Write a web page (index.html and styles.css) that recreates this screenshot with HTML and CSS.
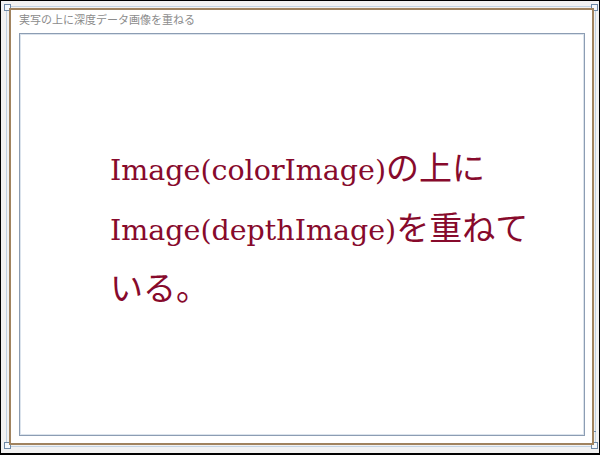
FILE: index.html
```html
<!DOCTYPE html>
<html lang="ja">
<head>
<meta charset="utf-8">
<title>実写の上に深度データ画像を重ねる</title>
<link rel="stylesheet" href="styles.css">
</head>
<body>
<div class="screen">
  <div class="selection">
    <span class="handle tl"></span>
    <span class="handle tr"></span>
    <span class="handle bl"></span>
    <span class="handle br"></span>
    <span class="tick"></span>
  </div>
  <div class="window">
    <div class="title">実写の上に深度データ画像を重ねる</div>
    <div class="canvas">
      <p class="message"><span class="en">Image(colorImage)</span><span class="ja">の上に</span><br><span class="en">Image(depthImage)</span><span class="ja">を重ねて</span><span class="ja">いる。</span></p>
    </div>
  </div>
</div>
</body>
</html>
```

FILE: styles.css
```css
* { box-sizing: border-box; }
html, body { margin: 0; padding: 0; background: #fff; }

.screen {
  position: relative;
  width: 600px;
  height: 455px;
  border: 1px solid #000;
  border-bottom-width: 2px;
  background: #f2f2f2;
  padding: 7px 0 0 8px;
}

.selection {
  position: absolute;
  left: 5px;
  top: 5px;
  width: 590px;
  height: 441px;
  border: 1px solid #c3d3e3;
  pointer-events: none;
}
.handle {
  position: absolute;
  width: 7px;
  height: 7px;
  border: 1px solid #6f89a6;
  background: #f4f8fc;
}
.handle.tl { left: -3px; top: -3px; }
.handle.tr { right: -3px; top: -3px; }
.handle.bl { left: -3px; bottom: -3px; }
.handle.br { right: -3px; bottom: -3px; }
.tick {
  position: absolute;
  right: -1px;
  top: 424px;
  width: 3px;
  height: 1px;
  background: #6f89a6;
}

.window {
  position: relative;
  width: 585px;
  height: 437px;
  border: 2px solid #a0835f;
  background: #fff;
  padding: 2px 7px 7px 8px;
}

.title {
  height: 21px;
  font-family: "Noto Sans CJK JP", sans-serif;
  font-size: 11px;
  line-height: 14px;
  color: #8c8c8c;
  white-space: nowrap;
}

.canvas {
  width: 566px;
  height: 403px;
  border: 1px solid #8c9db3;
  box-shadow: inset 0 0 0 1px #dbe3ec;
  padding: 107px 0 0 90px;
}

.message {
  margin: 0;
  width: 450px;
  font-family: "DejaVu Serif", "Noto Sans CJK JP", serif;
  font-size: 28.5px;
  line-height: 60px;
  color: #870a2c;
}
.message .ja {
  font-family: "Noto Sans CJK JP", sans-serif;
  font-size: 33px;
  line-height: 40px;
}
```
